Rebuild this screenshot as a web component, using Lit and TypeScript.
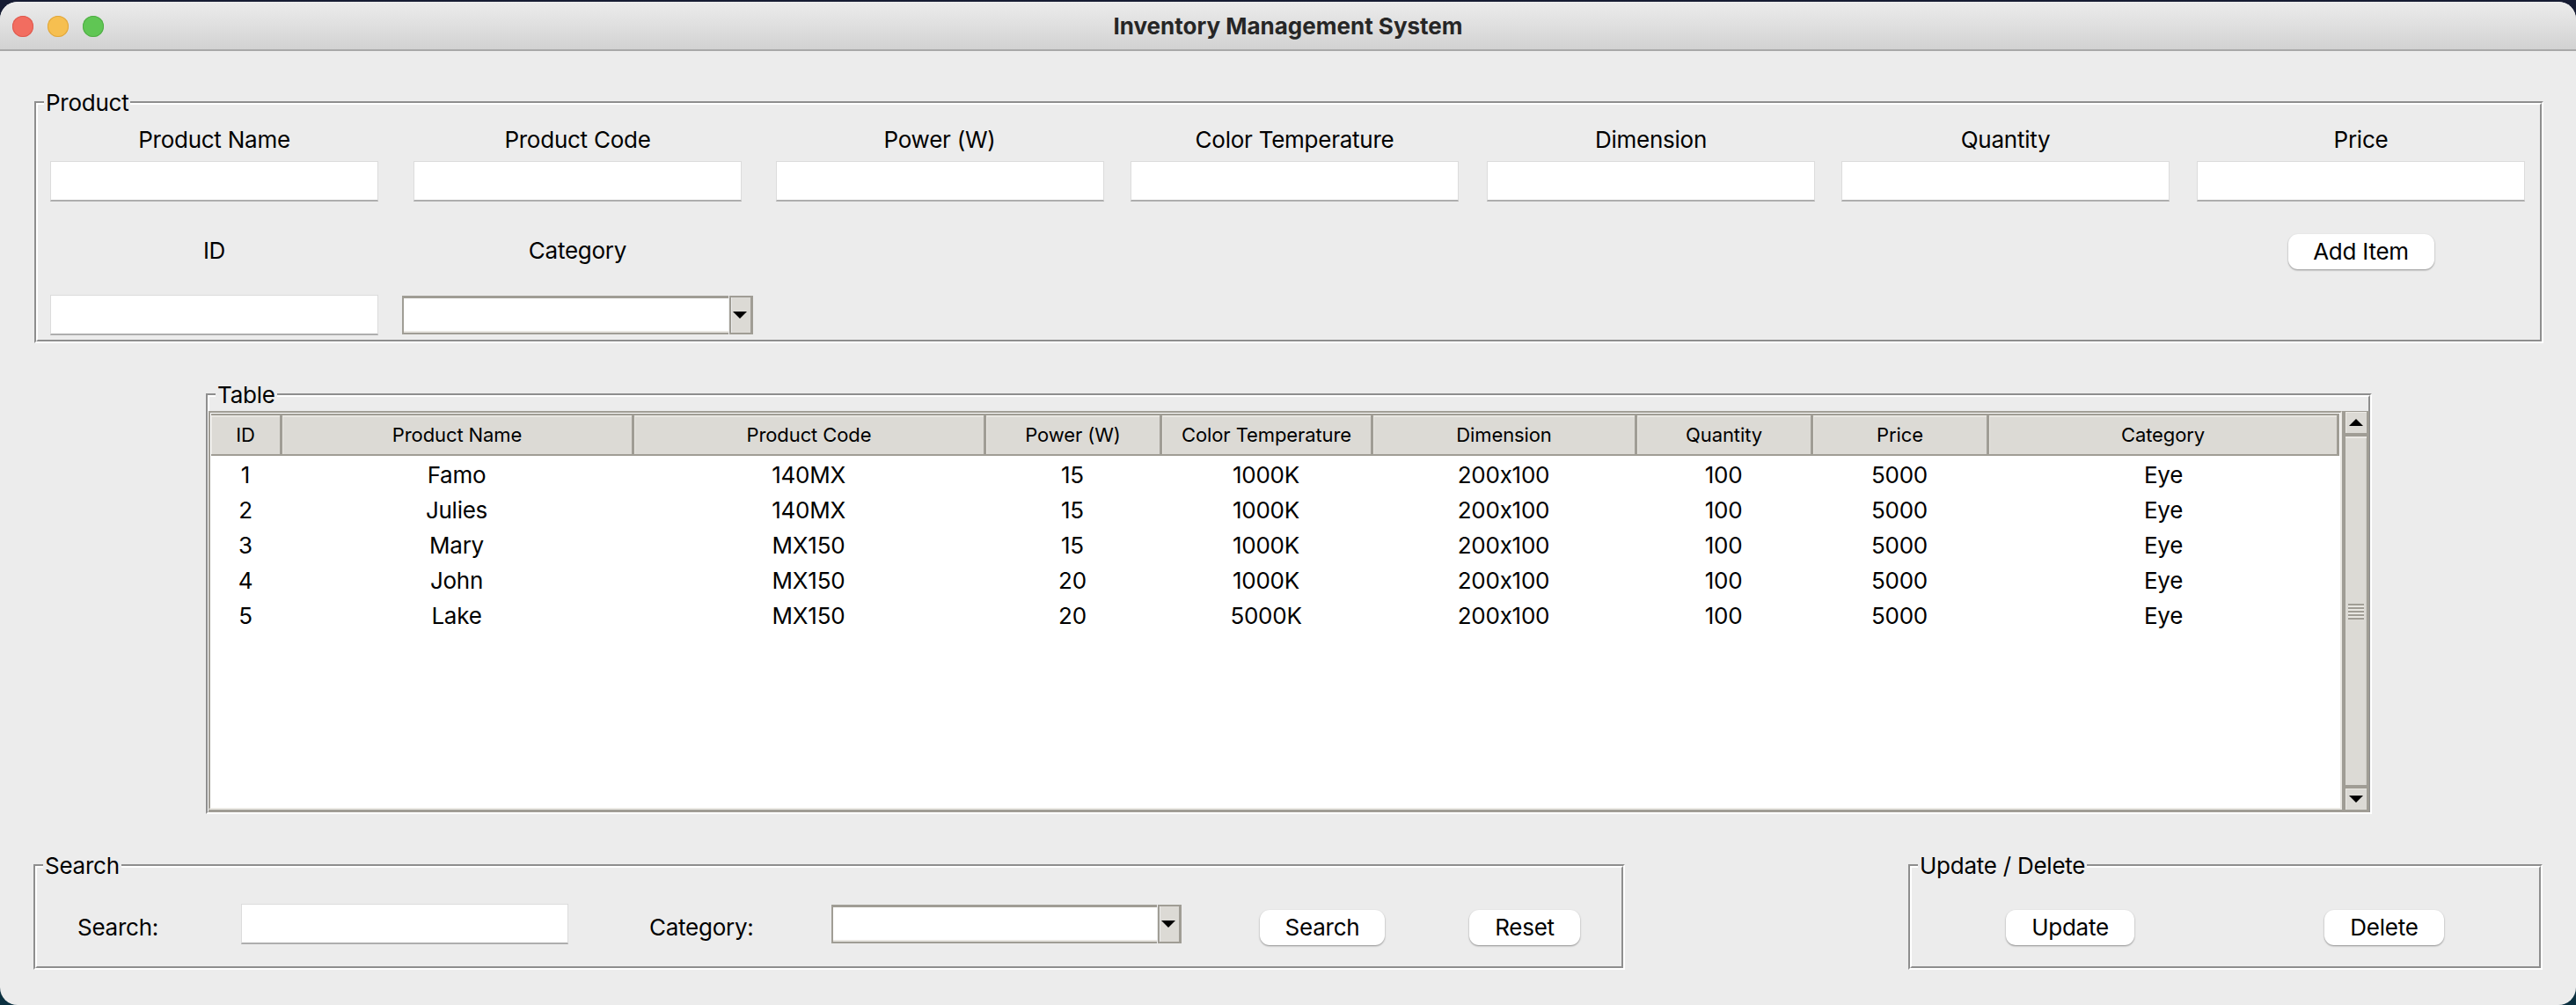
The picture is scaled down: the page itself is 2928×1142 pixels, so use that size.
import { LitElement, html, css } from 'lit';
import { customElement } from 'lit/decorators.js';

const COLUMNS = [
    { title: 'ID', key: 'id' },
    { title: 'Product Name', key: 'name' },
    { title: 'Product Code', key: 'code' },
    { title: 'Power (W)', key: 'power' },
    { title: 'Color Temperature', key: 'temp' },
    { title: 'Dimension', key: 'dim' },
    { title: 'Quantity', key: 'qty' },
    { title: 'Price', key: 'price' },
    { title: 'Category', key: 'cat' },
];

const ROWS: Record<string, string>[] = [
    { id: '1', name: 'Famo', code: '140MX', power: '15', temp: '1000K', dim: '200x100', qty: '100', price: '5000', cat: 'Eye' },
    { id: '2', name: 'Julies', code: '140MX', power: '15', temp: '1000K', dim: '200x100', qty: '100', price: '5000', cat: 'Eye' },
    { id: '3', name: 'Mary', code: 'MX150', power: '15', temp: '1000K', dim: '200x100', qty: '100', price: '5000', cat: 'Eye' },
    { id: '4', name: 'John', code: 'MX150', power: '20', temp: '1000K', dim: '200x100', qty: '100', price: '5000', cat: 'Eye' },
    { id: '5', name: 'Lake', code: 'MX150', power: '20', temp: '5000K', dim: '200x100', qty: '100', price: '5000', cat: 'Eye' },
];

const FIELDS = ['Product Name', 'Product Code', 'Power (W)', 'Color Temperature', 'Dimension', 'Quantity', 'Price'];

@customElement('app-root')
export class AppRoot extends LitElement {
    static styles = css`
      :host {
        display: block;
        width: 2928px;
        height: 1142px;
        overflow: hidden;
        background: linear-gradient(#161c33, #0b3040);
        font-family: Inter, 'Liberation Sans', sans-serif;
        font-size: 26px;
        font-feature-settings: 'calt' 0;
        letter-spacing: -0.25px;
        color: #000;
      }
      * {
        box-sizing: border-box;
      }
      .window {
        margin-top: 2px;
        height: 1140px;
        background: #ececec;
        border-radius: 20px;
        overflow: hidden;
      }
      .titlebar {
        height: 56px;
        display: flex;
        align-items: center;
        justify-content: center;
        position: relative;
        background: linear-gradient(#ececec, #d2d2d2);
        border-bottom: 2px solid #a8a8a8;
        font-weight: 700;
        font-size: 26px;
        letter-spacing: 0;
        color: #262626;
      }
      .lights {
        position: absolute;
        left: 14px;
        top: 16px;
        display: flex;
        gap: 16px;
      }
      .light {
        width: 24px;
        height: 24px;
        border-radius: 50%;
      }
      .red { background: #f26d60; box-shadow: inset 0 0 0 1px #de5a4f; }
      .yellow { background: #f6bf50; box-shadow: inset 0 0 0 1px #dfa63c; }
      .green { background: #60c654; box-shadow: inset 0 0 0 1px #50ad45; }

      .content {
        padding: 57px 37px 0 39px;
        display: flex;
        flex-direction: column;
        gap: 57px;
      }

      /* groove made of two nested borders */
      .group {
        position: relative;
        border: 2px solid;
        border-color: #8e8e8e #fff #fff #8e8e8e;
      }
      .group-body {
        border: 2px solid;
        border-color: #fff #8e8e8e #8e8e8e #fff;
        height: 100%;
      }
      .legend {
        position: absolute;
        left: 9px;
        top: -15px;
        line-height: 30px;
        padding: 0 2px;
        background: #ececec;
      }

      .product {
        height: 275px;
      }
      .product-grid {
        display: grid;
        grid-template-columns: 401px 425px 398px 409px 401px 405px 403px;
        grid-template-rows: 40px 56px 102px 44px;
        justify-items: center;
        align-items: center;
        padding-top: 19px;
      }
      .span-4 {
        grid-column: 3 / span 4;
      }
      .row-label {
        margin-bottom: 2px;
      }
      .add {
        margin-top: 2px;
      }

      input {
        display: block;
        width: 373px;
        height: 46px;
        padding: 0 4px;
        margin: 0;
        background: #fff;
        border: 1px solid #dcdcdc;
        border-bottom: 2px solid #aeaeae;
        border-radius: 0;
        outline: none;
        font: inherit;
      }

      button.action {
        height: 40px;
        padding: 0 0 2px;
        border: none;
        border-radius: 11px;
        background: #fff;
        box-shadow: 0 1px 2px rgba(0, 0, 0, 0.4);
        font: inherit;
        letter-spacing: inherit;
        color: #000;
      }
      .w-add { width: 166px; }
      .w-search { width: 142px; }
      .w-reset { width: 126px; }
      .w-update { width: 146px; }
      .w-delete { width: 136px; }

      .combo {
        display: flex;
        height: 44px;
        width: 399px;
      }
      .combo-wide {
        width: 398px;
      }
      .combo-field {
        flex: 1;
        background: #fff;
        border-top: 3px solid #a09d95;
        border-left: 2px solid #a09d95;
        border-bottom: 2px solid #a09d95;
        box-shadow: inset 0 -2px 0 #e8e6e1;
        margin-right: 1px;
      }
      .combo-arrow {
        width: 27px;
        display: flex;
        align-items: center;
        justify-content: center;
        padding-right: 3px;
        background: #dcdad5;
        border-left: 2px solid #a09d95;
        border-top: 2px solid #a09d95;
        border-bottom: 2px solid #a09d95;
        border-right: 3px solid #a09d95;
        box-shadow: inset 1px 0 0 #ececec;
      }
      svg {
        display: block;
      }

      .table-group {
        width: 2462px;
        height: 478px;
        align-self: center;
      }
      .table-wrap {
        margin: 16px -1px 0 -1px;
        height: 456px;
        display: flex;
        border-bottom: 3px solid #a09d95;
        background: #fff;
      }
      .tree {
        width: 2425px;
        border-top: 2px solid #a09d95;
        border-left: 2px solid #a09d95;
        border-right: 2px solid #ebe9e4;
        border-bottom: 2px solid #ebe9e4;
        background: #fff;
      }
      .tree-head,
      .tree-row {
        display: grid;
      }
      .tree-head {
        grid-template-columns: 81px 400px 400px 200px 240px 300px 200px 200px 398px;
        margin: 1px 0 2px 1px;
        height: 48px;
        font-size: 22px;
        letter-spacing: -0.1px;
      }
      .head-cell {
        display: flex;
        align-items: center;
        justify-content: center;
        background: #dcdad5;
        border: solid #a09d95;
        border-width: 2px 3px 2px 0;
        box-shadow: inset 1px 2px 0 #e8e6e1;
      }
      .tree-row {
        grid-template-columns: 80px 400px 400px 200px 240px 300px 200px 200px 400px;
        height: 40px;
      }
      .cell {
        text-align: center;
        line-height: 40px;
      }

      .scrollbar {
        width: 31px;
        padding: 1px 3px 0 4px;
        display: flex;
        flex-direction: column;
        gap: 4px;
        background: #a09d95;
      }
      .sb-btn {
        height: 24px;
        flex: none;
        display: flex;
        align-items: center;
        justify-content: center;
        background: #dcdad5;
        box-shadow: inset 1px 1px 0 #ebe9e4;
      }
      .thumb {
        flex: 1;
        display: flex;
        align-items: center;
        justify-content: center;
        background: #dcdad5;
        border-top: 2px solid #ebe9e4;
        box-shadow: inset -1px 0 0 #cfcdc8;
      }
      .grip {
        width: 18px;
        height: 18px;
        background: repeating-linear-gradient(#a09d95 0 2px, #e8e6e1 2px 4px);
      }

      .bottom {
        display: flex;
        justify-content: space-between;
        margin-left: -1px;
        padding-right: 1px;
      }
      .search {
        width: 1809px;
        height: 120px;
      }
      .update {
        width: 721px;
        height: 120px;
      }
      .bar {
        display: flex;
        align-items: center;
        height: 112px;
        padding-top: 16px;
      }
      .search .bar { padding-left: 46px; }
      .update .bar { padding-left: 107px; }
      .bar-label { margin-top: 6px; }
      .bar button { margin-top: 8px; }
      .l-search { width: 186px; }
      .l-category { width: 207px; margin-left: 92px; }
      .m-search { margin-left: 89px; }
      .m-reset { margin-left: 96px; }
      .m-delete { margin-left: 216px; }
      .bar input { width: 372px; }
    `;

    arrow(up = false) {
        const points = up ? '8,0 16,8 0,8' : '0,0 16,0 8,8';
        return html`<svg width="16" height="8" viewBox="0 0 16 8"><polygon points="${points}" fill="#000"></polygon></svg>`;
    }

    combo(extra = '') {
        return html`
        <div class="combo ${extra}">
            <div class="combo-field"></div>
            <div class="combo-arrow">${this.arrow()}</div>
        </div>
        `;
    }

    render() {
        return html`
        <div class="window">
            <div class="titlebar">
                <div class="lights">
                    <div class="light red"></div>
                    <div class="light yellow"></div>
                    <div class="light green"></div>
                </div>
                Inventory Management System
            </div>
            <div class="content">
                <section class="group product">
                    <div class="legend">Product</div>
                    <div class="group-body">
                        <div class="product-grid">
                            ${FIELDS.map((f) => html`<div>${f}</div>`)}
                            ${FIELDS.map(() => html`<input type="text" />`)}
                            <div class="row-label">ID</div>
                            <div class="row-label">Category</div>
                            <div class="span-4"></div>
                            <button class="action add w-add">Add Item</button>
                            <input type="text" />
                            ${this.combo()}
                        </div>
                    </div>
                </section>

                <section class="group table-group">
                    <div class="legend">Table</div>
                    <div class="group-body">
                        <div class="table-wrap">
                            <div class="tree">
                                <div class="tree-head">
                                    ${COLUMNS.map((c) => html`<div class="head-cell">${c.title}</div>`)}
                                </div>
                                ${ROWS.map((r) => html`
                                <div class="tree-row">
                                    ${COLUMNS.map((c) => html`<div class="cell">${r[c.key]}</div>`)}
                                </div>
                                `)}
                            </div>
                            <div class="scrollbar">
                                <div class="sb-btn">${this.arrow(true)}</div>
                                <div class="thumb"><div class="grip"></div></div>
                                <div class="sb-btn">${this.arrow()}</div>
                            </div>
                        </div>
                    </div>
                </section>

                <div class="bottom">
                    <section class="group search">
                        <div class="legend">Search</div>
                        <div class="group-body">
                            <div class="bar">
                                <div class="bar-label l-search">Search:</div>
                                <input type="text" />
                                <div class="bar-label l-category">Category:</div>
                                ${this.combo('combo-wide')}
                                <button class="action w-search m-search">Search</button>
                                <button class="action w-reset m-reset">Reset</button>
                            </div>
                        </div>
                    </section>
                    <section class="group update">
                        <div class="legend">Update / Delete</div>
                        <div class="group-body">
                            <div class="bar">
                                <button class="action w-update">Update</button>
                                <button class="action w-delete m-delete">Delete</button>
                            </div>
                        </div>
                    </section>
                </div>
            </div>
        </div>
        `;
    }
}
